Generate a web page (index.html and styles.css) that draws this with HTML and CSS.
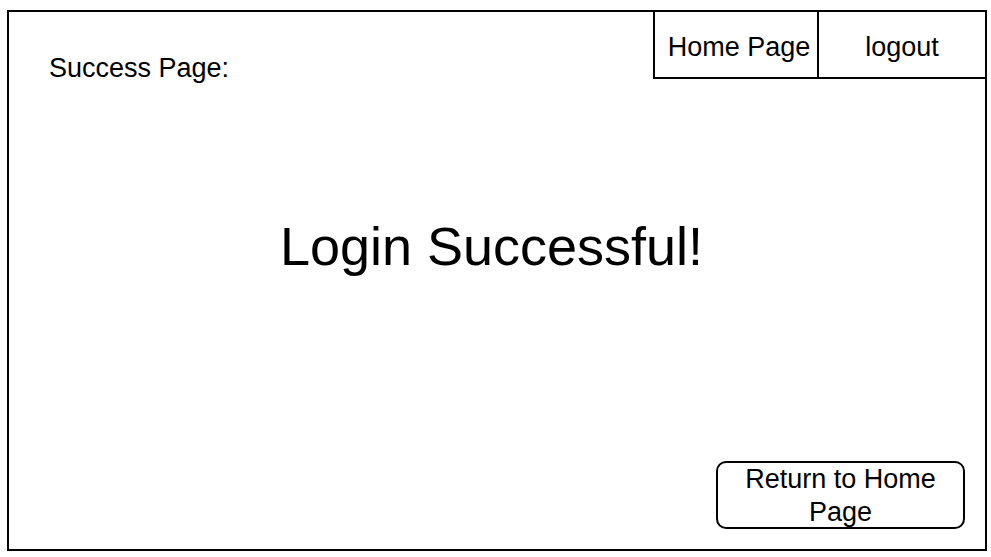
FILE: index.html
```html
<!DOCTYPE html>
<html lang="en">
<head>
<meta charset="utf-8">
<title>Success Page</title>
<link rel="stylesheet" href="styles.css">
</head>
<body>
<div class="frame">
  <div class="top">
    <div class="title">Success Page:</div>
    <nav class="nav">
      <div class="nav-item nav-home">Home Page</div>
      <div class="nav-item nav-logout">logout</div>
    </nav>
  </div>
  <h1 class="heading">Login Successful!</h1>
  <button class="return-btn">Return to Home Page</button>
</div>
</body>
</html>
```
FILE: styles.css
```css
html, body {
  margin: 0;
  padding: 0;
  background: #fff;
}
body {
  padding: 10px 0 0 7px;
  font-family: "Liberation Sans", Arial, sans-serif;
  color: #000;
}
.frame {
  box-sizing: border-box;
  width: 980px;
  height: 541px;
  border: 2px solid #000;
  display: flex;
  flex-direction: column;
}
.top {
  display: flex;
  justify-content: space-between;
  align-items: flex-start;
}
.title {
  font-size: 27px;
  line-height: 30px;
  padding: 41px 0 0 40px;
}
.nav {
  display: flex;
  margin: -2px -2px 0 0;
}
.nav-item {
  box-sizing: border-box;
  height: 69px;
  border: 2px solid #000;
  display: flex;
  align-items: center;
  justify-content: center;
  font-size: 27px;
  line-height: 30px;
  padding-top: 4px;
}
.nav-home {
  width: 166px;
  padding-left: 6px;
}
.nav-logout {
  width: 170px;
  margin-left: -2px;
}
.heading {
  margin: 133px 0 0 0;
  padding-right: 11px;
  text-align: center;
  font-weight: normal;
  font-size: 54px;
  line-height: 60px;
}
.return-btn {
  box-sizing: border-box;
  margin: auto 20px 20px auto;
  width: 249px;
  height: 68px;
  padding: 0;
  border: 2px solid #000;
  border-radius: 10px;
  background: #fff;
  color: #000;
  font-family: "Liberation Sans", Arial, sans-serif;
  font-size: 27px;
  line-height: 33px;
  text-align: center;
}
```
